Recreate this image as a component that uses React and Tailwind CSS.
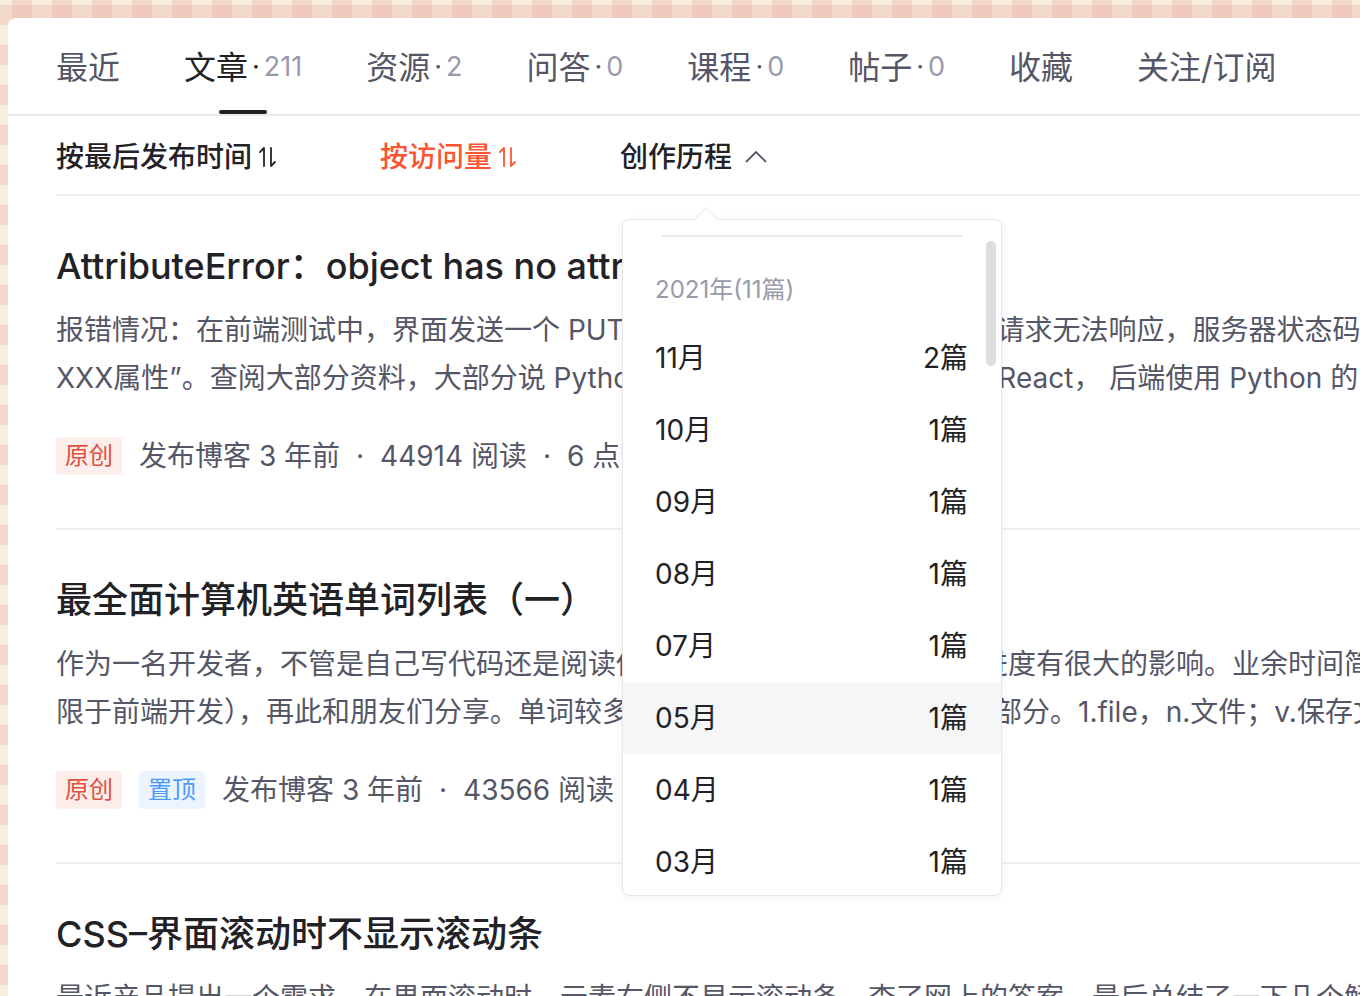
import React from 'react';

const FONT = { fontFamily: 'Inter, "Noto Sans CJK SC", sans-serif' };

const tabs = [
  { label: '最近' },
  { label: '文章', count: '211', active: true },
  { label: '资源', count: '2' },
  { label: '问答', count: '0' },
  { label: '课程', count: '0' },
  { label: '帖子', count: '0' },
  { label: '收藏' },
  { label: '关注/订阅' },
];

const months = [
  ['11月', '2篇'],
  ['10月', '1篇'],
  ['09月', '1篇'],
  ['08月', '1篇'],
  ['07月', '1篇'],
  ['05月', '1篇', true],
  ['04月', '1篇'],
  ['03月', '1篇'],
  ['02月', '1篇'],
];

const articles = [
  {
    title: 'AttributeError：object has no attribute',
    lines: [
      '报错情况：在前端测试中，界面发送一个 PUT 请求，后台一直报错，导致整请求无法响应，服务器状态码 500',
      'XXX属性”。查阅大部分资料，大部分说 Python 版本的问题，项目前端使用 React， 后端使用 Python 的 Django',
    ],
    tags: ['原创'],
    meta: ['发布博客 3 年前', '44914 阅读', '6 点赞', '2 评论', '8 收藏'],
  },
  {
    title: '最全面计算机英语单词列表（一）',
    lines: [
      '作为一名开发者，不管是自己写代码还是阅读他人的代码，英语水平对开发进度有很大的影响。业余时间简单整理',
      '限于前端开发），再此和朋友们分享。单词较多，将会分多篇文章，这是第一部分。1.file，n.文件；v.保存文件',
    ],
    tags: ['原创', '置顶'],
    meta: ['发布博客 3 年前', '43566 阅读', '97 点赞', '326 收藏'],
  },
  {
    title: 'CSS–界面滚动时不显示滚动条',
    lines: [
      '最近产品提出一个需求，在界面滚动时，元素右侧不显示滚动条，查了网上的答案，最后总结了一下几个解决方法',
    ],
    tags: [],
    meta: [],
  },
];

function SortIcon() {
  return (
    <svg width="26" height="24" viewBox="0 0 26 24" fill="none" stroke="currentColor" strokeWidth="1.8" strokeLinecap="round" className="ml-[3px]">
      <path d="M9 3v18M9 3L5 7" />
      <path d="M16 3v18M16 21l4-4" />
    </svg>
  );
}

function Tag({ text }) {
  const blue = text === '置顶';
  return (
    <span
      className={`h-[38px] px-[9px] rounded-[4px] flex items-center text-[24px] ${
        blue ? 'bg-[#ebf4ff] text-[#4d9bf8]' : 'bg-[#fdeeec] text-[#e0513d]'
      }`}
    >
      {text}
    </span>
  );
}

function Article({ a }) {
  return (
    <div className="pt-[46px] pb-[53px] border-b-2 border-[#f0f0f2]">
      <h2 className="text-[36px] leading-[48px] font-medium text-[#222226] whitespace-nowrap">{a.title}</h2>
      <div className="mt-4 text-[28px] leading-[48px] text-[#555666]">
        {a.lines.map((l, i) => (
          <div key={i} className="whitespace-nowrap">{l}</div>
        ))}
      </div>
      {a.meta.length > 0 && (
        <div className="mt-[35px] h-[38px] flex items-center gap-[17px] text-[28px] leading-[38px] text-[#555666] whitespace-nowrap">
          {a.tags.map((t) => (
            <Tag key={t} text={t} />
          ))}
          <span className="flex items-center">
            {a.meta.map((m, i) => (
              <React.Fragment key={m}>
                {i > 0 && <span className="w-[40px] text-center">·</span>}
                <span>{m}</span>
              </React.Fragment>
            ))}
          </span>
        </div>
      )}
    </div>
  );
}

function Dropdown() {
  return (
    <div className="absolute left-[614px] top-[201px] w-[380px]">
      <div className="absolute left-[75px] -top-[8px] w-[18px] h-[18px] rotate-45 bg-white border-l border-t border-[#ebebef] z-10" />
      <div className="relative h-[677px] bg-white border border-[#e6e6ea] rounded-[8px] shadow-[0_2px_10px_rgba(0,0,0,0.06)] overflow-hidden">
        <div className="h-[15px]" />
        <div className="mx-[39px] h-[2px] bg-[#e8e8ed]" />
        <div className="h-[85px] flex items-end pb-4 px-[32px] text-[24px] leading-[32px] text-[#999aaa]">2021年(11篇)</div>
        {months.map(([m, n, hl]) => (
          <div
            key={m}
            className={`h-[72px] flex items-center justify-between pl-[32px] pr-[33px] text-[28px] text-[#222226] ${
              hl ? 'bg-[#f5f6f7]' : ''
            }`}
          >
            <span>{m}</span>
            <span>{n}</span>
          </div>
        ))}
        <div className="absolute right-[5px] top-[21px] w-[10px] h-[125px] rounded-full bg-[#dddde1]" />
      </div>
    </div>
  );
}

export default function App() {
  return (
    <div
      style={FONT}
      className="w-[1360px] h-[996px] overflow-hidden pl-2 pt-[18px] bg-[#f8efdf] bg-[linear-gradient(90deg,rgba(234,170,160,0.32)_50%,transparent_50%),linear-gradient(180deg,rgba(234,170,160,0.32)_50%,transparent_50%)] bg-size-[40px_40px] bg-[length:40px_40px] bg-position-[12px_5px] bg-[position:12px_5px]"
    >
      <div className="relative h-full bg-white rounded-tl-[8px] overflow-hidden">
        {/* Tabs */}
        <div className="h-[98px] pt-[3px] flex items-stretch gap-[64px] px-[48px] border-b-2 border-[#e8e8ed]">
          {tabs.map((t) => (
            <div key={t.label} className="relative flex items-center whitespace-nowrap">
              <span className={`text-[32px] ${t.active ? 'text-[#222226]' : 'text-[#555666]'}`}>{t.label}</span>
              {t.count && (
                <span className="text-[27px] text-[#999aaa]">
                  <span className={`mx-[4px] ${t.active ? 'text-[#222226]' : 'text-[#555666]'}`}>·</span>
                  {t.count}
                </span>
              )}
              {t.active && (
                <div className="absolute bottom-0 left-1/2 -translate-x-1/2 w-[48px] h-[4px] rounded-full bg-[#222226]" />
              )}
            </div>
          ))}
        </div>

        <div className="pl-[48px]">
          {/* Sort row */}
          <div className="h-[80px] pt-[3px] flex items-center gap-[99px] border-b-2 border-[#f0f0f2] text-[28px] font-medium whitespace-nowrap">
            <span className="flex items-center text-[#222226]">
              按最后发布时间
              <SortIcon />
            </span>
            <span className="flex items-center text-[#fc5531]">
              按访问量
              <SortIcon />
            </span>
            <span className="flex items-center text-[#222226]">
              创作历程
              <svg width="24" height="24" viewBox="0 0 24 24" fill="none" stroke="#555666" strokeWidth="1.8" className="ml-3">
                <path d="M2 17l10-10 10 10" />
              </svg>
            </span>
          </div>

          {articles.map((a, i) => (
            <Article key={i} a={a} />
          ))}
        </div>

        <Dropdown />
      </div>
    </div>
  );
}
